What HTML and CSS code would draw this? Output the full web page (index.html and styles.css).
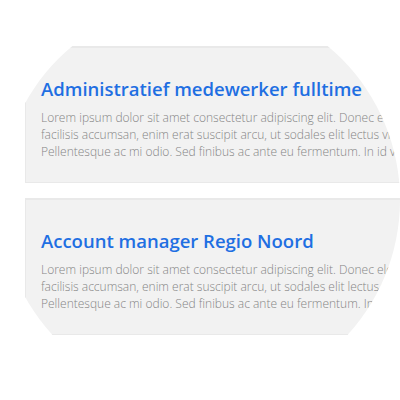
FILE: index.html
```html
<!DOCTYPE html>
<html>
<head>
    <title>Vacatures</title>
    <link rel="stylesheet" href="styles.css">
</head>
<body>
    <div class="lens">
        <div class="jobs">
            <!-- Vacature 1 -->
            <div class="job">
                <h2 class="job-title">Administratief medewerker fulltime</h2>
                <p class="job-text">
                    <span>Lorem ipsum dolor sit amet consectetur adipiscing elit. Donec eleifend</span>
                    <span>facilisis accumsan, enim erat suscipit arcu, ut sodales elit lectus vitae</span>
                    <span>Pellentesque ac mi odio. Sed finibus ac ante eu fermentum. In id varius</span>
                </p>
            </div>

            <!-- Vacature 2 -->
            <div class="job">
                <h2 class="job-title">Account manager Regio Noord</h2>
                <p class="job-text">
                    <span>Lorem ipsum dolor sit amet consectetur adipiscing elit. Donec eleifend</span>
                    <span>facilisis accumsan, enim erat suscipit arcu, ut sodales elit lectus vitae</span>
                    <span>Pellentesque ac mi odio. Sed finibus ac ante eu fermentum. In id varius</span>
                </p>
            </div>
        </div>
    </div>
</body>
</html>
```

FILE: styles.css
```css
body {
    margin: 0;
    background-color: #ffffff;
    font-family: "Open Sans", Arial, sans-serif;
}

.lens {
    width: 400px;
    height: 400px;
    overflow: hidden;
    clip-path: circle(200px at 200px 200px);
}

.jobs {
    display: flex;
    flex-direction: column;
    gap: 15px;
    padding: 46px 0 0 25px;
    width: 520px;
}

.job {
    background-color: #f2f2f2;
    border: 1px solid #e9e9e9;
    border-top-width: 2px;
    padding: 28px 15px 22px;
}

.job-title {
    margin: 0 0 8px;
    font-size: 18.5px;
    font-weight: 600;
    line-height: 25px;
    color: #1f6fe2;
}

.job-text {
    margin: 0;
    font-size: 12px;
    font-weight: 300;
    line-height: 17px;
    color: #858585;
}

.job-text span {
    display: block;
    white-space: nowrap;
}
```
